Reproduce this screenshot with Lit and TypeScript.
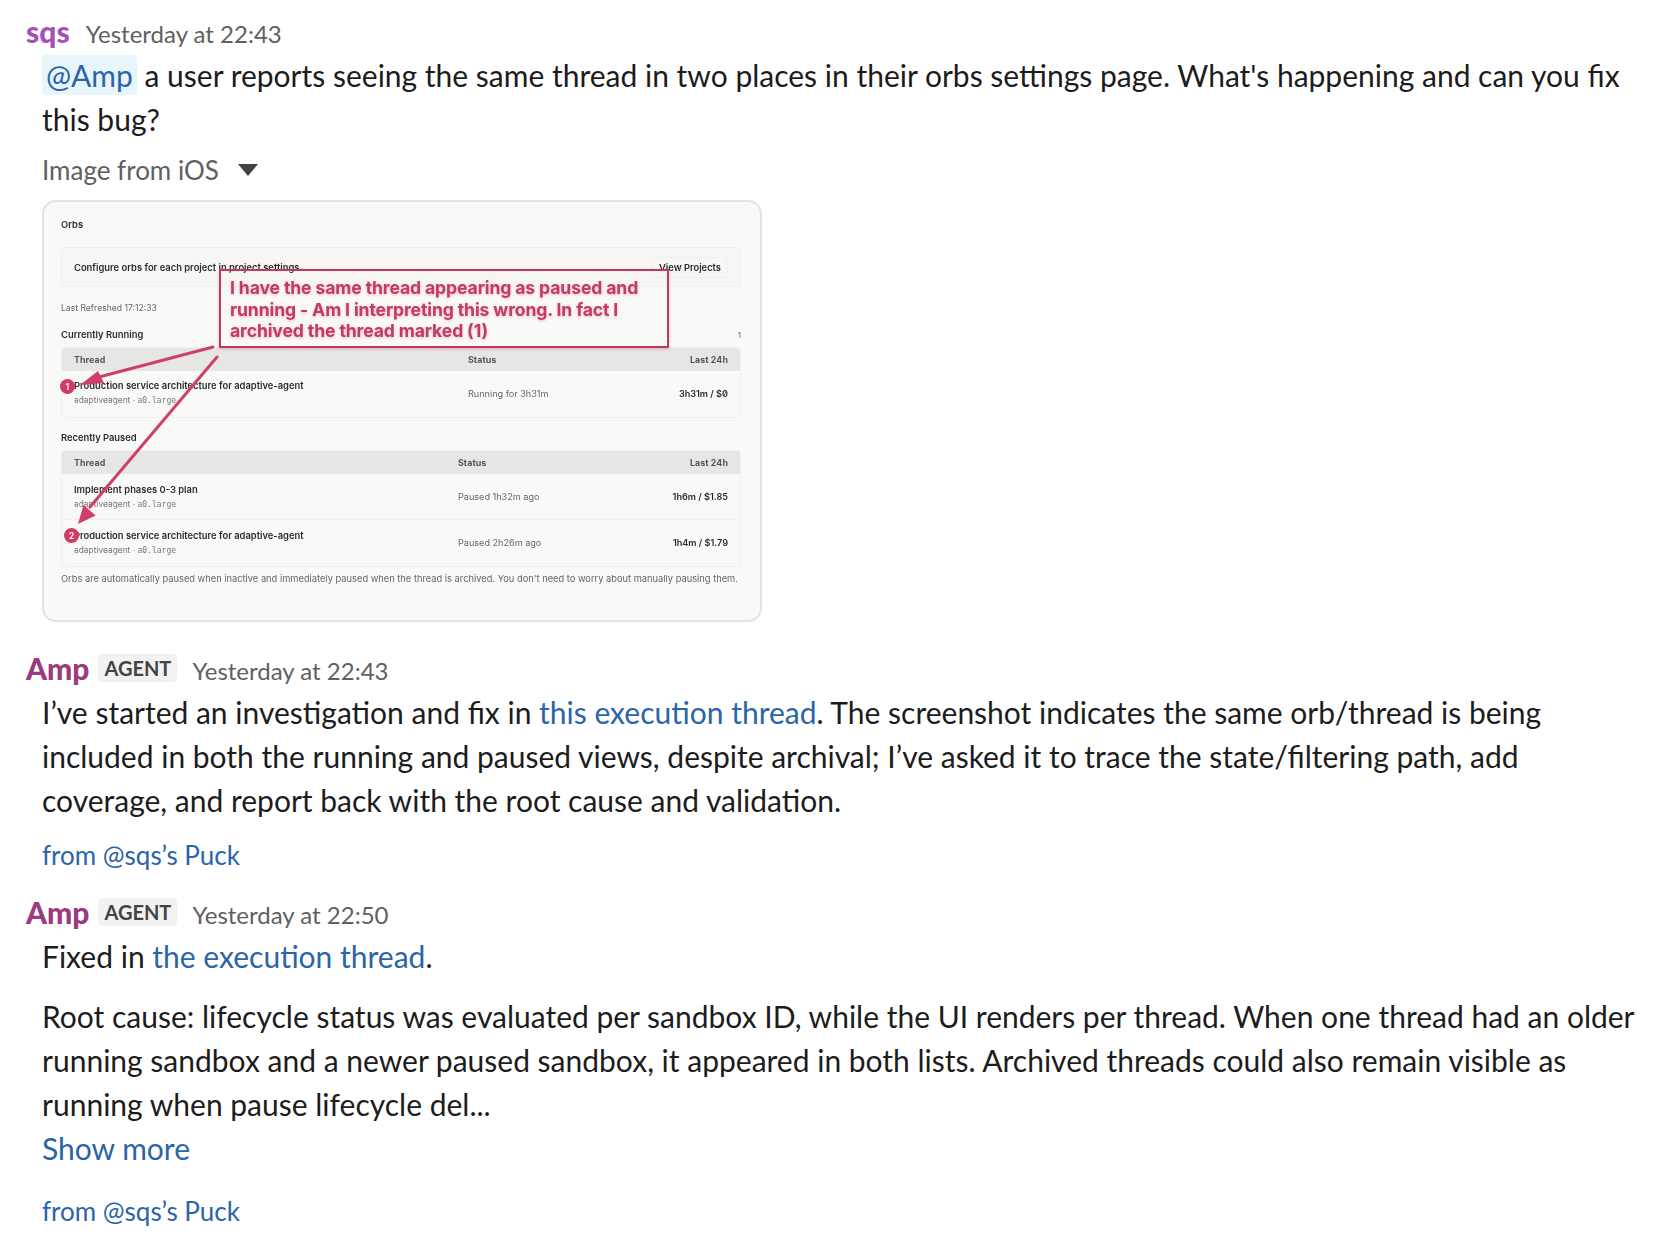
import { LitElement, html, css } from "lit";
import { customElement } from "lit/decorators.js";

@customElement("orbs-shot")
class OrbsShot extends LitElement {
  static styles = css`
    :host { display: block; position: relative; width: 720px; height: 422px; box-sizing: border-box; border: 2px solid #e3e3e2; border-radius: 14px; background: #f9f9f8; overflow: hidden; font-family: Inter, sans-serif; color: #2b2b2b; line-height: 15px; }
    .inner { filter: blur(0.45px); padding: 16px 19px 0 17px; font-size: 9.4px; }
    .title { font-weight: 600; height: 14px; line-height: 14px; }
    .cfg { margin-top: 15px; height: 40px; box-sizing: border-box; border: 1px solid #efefee; border-radius: 4px; background: #f6f6f5; display: flex; align-items: center; justify-content: space-between; padding: 0 12px; font-weight: 600; }
    .btn { border: 1px solid #efefee; border-radius: 3px; padding: 2px 6px; }
    .ref { margin-top: 14px; color: #666; font-size: 8.6px; height: 14px; line-height: 14px; }
    .sec { margin-top: 13px; display: flex; justify-content: space-between; font-weight: 600; height: 14px; line-height: 14px; }
    .sec i { font-style: normal; font-weight: 400; color: #666; font-size: 8px; }
    .t { margin-top: 5px; border: 1px solid #f0f0ef; border-radius: 4px; overflow: hidden; }
    .row { display: grid; padding: 0 12px; align-items: center; box-sizing: border-box; }
    .a { grid-template-columns: 394px 1fr auto; }
    .b { grid-template-columns: 384px 1fr auto; }
    .head { height: 23px; background: #e6e6e5; font-size: 8.8px; font-weight: 700; color: #555; letter-spacing: 0.1px; }
    .body { height: 46px; padding-bottom: 2px; }
    .short { height: 45px; padding-bottom: 0; }
    .tall { height: 47px; padding-bottom: 1px; }
    .body + .body { border-top: 1px solid #f0f0ef; }
    .name { font-weight: 600; line-height: 15px; }
    .sub { font-size: 8.4px; color: #777; line-height: 15px; }
    .sub b { font-family: "DejaVu Sans Mono", monospace; font-weight: 400; font-size: 8px; }
    .st { color: #666; font-size: 9.1px; }
    .cost { font-weight: 600; font-size: 9.1px; font-feature-settings: "zero" 1; }
    .gap { margin-top: 13px; }
    .foot { margin-top: 4px; color: #666; font-size: 9.3px; white-space: nowrap; }
    .note { position: absolute; left: 175px; top: 67px; width: 450px; height: 79px; box-sizing: border-box; border: 2.5px solid #c0395f; padding: 6px 9px; color: #c43a63; font-size: 17.6px; font-weight: 700; line-height: 21.5px; text-shadow: 0 1px 3px rgba(200,60,100,.35); box-shadow: 0 1px 3px rgba(200,60,100,.35); filter: blur(0.4px); letter-spacing: -0.13px; }
    svg { position: absolute; left: 0; top: 0; filter: blur(0.4px); }
    .badge { position: absolute; width: 15px; height: 15px; border-radius: 50%; background: #d23a62; color: #fff; font-size: 9px; font-weight: 600; display: flex; align-items: center; justify-content: center; filter: blur(0.3px); }
    .b1 { left: 16px; top: 177px; }
    .b2 { left: 20px; top: 326px; }
  `;
  render() {
    const sub = html`<div class="sub">adaptiveagent · <b>a0.large</b></div>`;
    return html`
      <div class="inner">
        <div class="title">Orbs</div>
        <div class="cfg"><span>Configure orbs for each project in project settings.</span><span class="btn">View Projects</span></div>
        <div class="ref">Last Refreshed 17:12:33</div>
        <div class="sec"><span>Currently Running</span><i>1</i></div>
        <div class="t">
          <div class="row a head"><span>Thread</span><span>Status</span><span>Last 24h</span></div>
          <div class="row a body"><div><div class="name">Production service architecture for adaptive-agent</div>${sub}</div><span class="st">Running for 3h31m</span><span class="cost">3h31m / $0</span></div>
        </div>
        <div class="sec gap"><span>Recently Paused</span></div>
        <div class="t">
          <div class="row b head"><span>Thread</span><span>Status</span><span>Last 24h</span></div>
          <div class="row b body short"><div><div class="name">Implement phases 0-3 plan</div>${sub}</div><span class="st">Paused 1h32m ago</span><span class="cost">1h6m / $1.85</span></div>
          <div class="row b body tall"><div><div class="name">Production service architecture for adaptive-agent</div>${sub}</div><span class="st">Paused 2h26m ago</span><span class="cost">1h4m / $1.79</span></div>
        </div>
        <div class="foot">Orbs are automatically paused when inactive and immediately paused when the thread is archived. You don't need to worry about manually pausing them.</div>
      </div>
      <svg width="716" height="418" viewBox="0 0 716 418">
        <g stroke="#cf4068" stroke-width="3" fill="#cf4068" stroke-linecap="round">
          <line x1="169" y1="145" x2="55" y2="175"></line>
          <polygon points="36,183 54,169 60,181" stroke="none"></polygon>
          <line x1="173" y1="155" x2="46" y2="305"></line>
          <polygon points="34,322 39.5,303 51.7,313.5" stroke="none"></polygon>
        </g>
      </svg>
      <div class="badge b1">1</div>
      <div class="badge b2">2</div>
      <div class="note">I have the same thread appearing as paused and<br />running - Am I interpreting this wrong. In fact I<br />archived the thread marked (1)</div>
    `;
  }
}

@customElement("app-root")
class AppRoot extends LitElement {
  static styles = css`
    :host { display: block; width: 1662px; height: 1242px; box-sizing: border-box; overflow: hidden; background: #fff; font-family: Lato, sans-serif; font-size: 30px; line-height: 44px; color: #1d1c1d; padding: 11px 0 0 26px; }
    .hd { display: flex; align-items: baseline; height: 42px; line-height: 40px; }
    .who { font-weight: 900; font-size: 30px; }
    .sqs { color: #a64fb8; }
    .amp { color: #9b3a7c; }
    .time { color: #616061; font-size: 24px; margin-left: 16px; }
    .tag { font-size: 20px; font-weight: 700; color: #454245; background: #f2f2f2; border-radius: 4px; height: 28px; line-height: 28px; padding: 0 6px; margin-left: 9px; align-self: flex-start; margin-top: 6px; }
    .tag + .time { margin-left: 15px; }
    .msg { padding-left: 16px; width: 1600px; }
    .mention { color: #2b64a8; background: #e8f5fa; border-radius: 4px; padding: 2px 4px; }
    a { color: #2b64a8; text-decoration: none; }
    .file { color: #616061; font-size: 26px; display: flex; align-items: center; margin-top: 7px; height: 44px; }
    .file svg { margin-left: 19px; }
    .shot { margin-top: 8px; }
    .from { font-size: 26px; margin-top: 11px; height: 44px; }
    .last { margin-top: 19px; }
    .m2 { margin-top: 26px; }
    .m3 { margin-top: 15px; }
    .para { margin-top: 16px; }
  `;
  render() {
    return html`
      <div class="hd"><span class="who sqs">sqs</span><span class="time">Yesterday at 22:43</span></div>
      <div class="msg">
        <div><span class="mention">@Amp</span> a user reports seeing the same thread in two places in their orbs settings page. What's happening and can you fix this bug?</div>
        <div class="file"><span>Image from iOS</span><svg width="20" height="14" viewBox="0 0 20 14"><polygon points="0,1 20,1 10,13" fill="#454245"></polygon></svg></div>
        <div class="shot"><orbs-shot></orbs-shot></div>
      </div>
      <div class="hd m2"><span class="who amp">Amp</span><span class="tag">AGENT</span><span class="time">Yesterday at 22:43</span></div>
      <div class="msg">
        <div>I’ve started an investigation and fix in <a>this execution thread</a>. The screenshot indicates the same orb/thread is being included in both the running and paused views, despite archival; I’ve asked it to trace the state/filtering path, add coverage, and report back with the root cause and validation.</div>
        <div class="from"><a>from @sqs’s Puck</a></div>
      </div>
      <div class="hd m3"><span class="who amp">Amp</span><span class="tag">AGENT</span><span class="time">Yesterday at 22:50</span></div>
      <div class="msg">
        <div>Fixed in <a>the execution thread</a>.</div>
        <div class="para">Root cause: lifecycle status was evaluated per sandbox ID, while the UI renders per thread. When one thread had an older running sandbox and a newer paused sandbox, it appeared in both lists. Archived threads could also remain visible as running when pause lifecycle del...</div>
        <div><a>Show more</a></div>
        <div class="from last"><a>from @sqs’s Puck</a></div>
      </div>
    `;
  }
}
